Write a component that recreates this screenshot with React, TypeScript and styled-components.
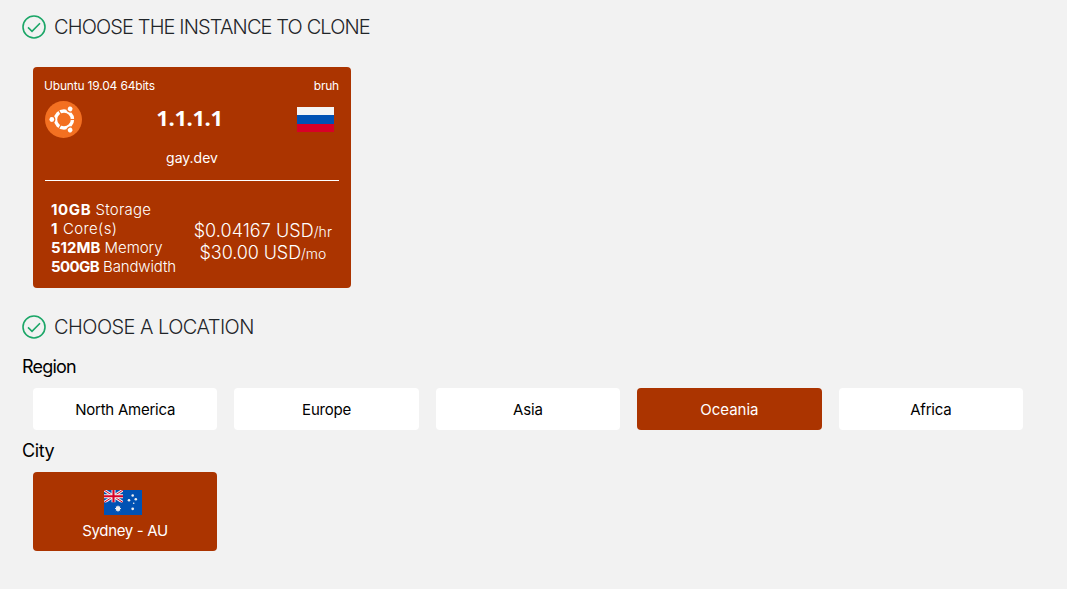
import React, { useState } from "react";
import styled, { createGlobalStyle, css } from "styled-components";

const GlobalStyle = createGlobalStyle`
  * {
    box-sizing: border-box;
  }
  body {
    margin: 0;
    background: #f2f2f2;
    font-family: "Inter", "Liberation Sans", sans-serif;
    color: #000;
  }
`;

const regions = [
  { name: "North America", spacing: -0.25 },
  { name: "Europe", spacing: -0.2 },
  { name: "Asia", spacing: -0.1 },
  { name: "Oceania", spacing: 0 },
  { name: "Africa", spacing: -0.25 },
];

const specs = [
  { amount: "10GB", label: "Storage", bold: 0.6, spacing: 0.2 },
  { amount: "1", label: "Core(s)", bold: 1, spacing: 0.35 },
  { amount: "512MB", label: "Memory", bold: 0, spacing: -0.05 },
  { amount: "500GB", label: "Bandwidth", bold: -0.6, spacing: -0.15 },
];

const Page = styled.main`
  width: 1067px;
  height: 589px;
  padding: 12px 44px 0 22px;
  background: #f2f2f2;
  overflow: hidden;
`;

const Heading = styled.h2`
  display: flex;
  align-items: center;
  gap: 8px;
  height: 30px;
  margin: 0;
  font-size: 20px;
  font-weight: 300;
  color: #1f2529;
  white-space: nowrap;
`;

const HeadingText = styled.span<{ $spacing: number }>`
  letter-spacing: ${(p) => p.$spacing}px;
`;

const InstanceCard = styled.section`
  display: flex;
  flex-direction: column;
  width: 318px;
  height: 221px;
  margin: 25px 0 24px 11px;
  padding: 10px 12px 0;
  border-radius: 4px;
  background: #ab3400;
  color: #fff;
  white-space: nowrap;
`;

const CardTop = styled.div`
  display: flex;
  justify-content: space-between;
  height: 18px;
  line-height: 18px;
  font-size: 12px;
`;

const OsName = styled.span`
  margin-left: -1px;
  letter-spacing: -0.18px;
`;

const Plan = styled.span`
  letter-spacing: -0.2px;
`;

const CardMain = styled.div`
  display: flex;
  align-items: center;
  justify-content: space-between;
  height: 48px;
  padding-right: 5px;
`;

const Address = styled.strong`
  padding-bottom: 4px;
  font-family: "Open Sans", "Noto Sans", sans-serif;
  font-size: 22px;
  font-weight: 700;
  line-height: 30px;
  letter-spacing: -0.4px;
`;

const Host = styled.div`
  height: 38px;
  padding-top: 5px;
  font-size: 14px;
  line-height: 20px;
  text-align: center;
  border-bottom: 1px solid #fff;
`;

const CardDetails = styled.div`
  display: flex;
  justify-content: space-between;
  padding: 19px 7px 0 6px;
`;

const Specs = styled.ul`
  margin: 0;
  padding: 0;
  list-style: none;
  font-size: 15px;
  line-height: 19px;
`;

const Spec = styled.li<{ $spacing: number; $bold: number }>`
  font-weight: 300;
  letter-spacing: ${(p) => p.$spacing}px;

  b {
    font-weight: 700;
    letter-spacing: ${(p) => p.$bold}px;
  }
`;

const Prices = styled.div`
  padding-top: 20px;
  font-size: 18px;
  font-weight: 300;
  line-height: 22px;
  text-align: center;
`;

const Price = styled.div<{ $spacing: number }>`
  height: 22px;
  letter-spacing: ${(p) => p.$spacing}px;

  small {
    font-size: 14px;
    line-height: 1;
  }
`;

const FieldLabel = styled.h3<{ $spacing: number }>`
  height: 42px;
  margin: 0;
  font-size: 18px;
  font-weight: 400;
  line-height: 42px;
  letter-spacing: ${(p) => p.$spacing}px;
`;

const RegionField = styled.div`
  padding-top: 4px;
`;

const RegionRow = styled.div`
  display: grid;
  grid-template-columns: repeat(5, 1fr);
  gap: 17px;
  margin-left: 11px;
`;

const option = css<{ $active: boolean; $spacing: number }>`
  border: 0;
  border-radius: 4px;
  padding: 0;
  font-family: inherit;
  font-size: 15px;
  font-weight: 400;
  letter-spacing: ${(p) => p.$spacing}px;
  background: ${(p) => (p.$active ? "#ab3400" : "#fff")};
  color: ${(p) => (p.$active ? "#fff" : "#000")};
`;

const RegionButton = styled.button<{ $active: boolean; $spacing: number }>`
  ${option}
  height: 42px;
`;

const CityButton = styled.button<{ $active: boolean; $spacing: number }>`
  ${option}
  display: flex;
  flex-direction: column;
  align-items: center;
  width: 184px;
  height: 79px;
  margin-left: 11px;
  padding-top: 18px;
  gap: 6px;
  line-height: 20px;

  svg {
    margin-right: 4px;
  }
`;

const RussianFlag = styled.div`
  width: 37px;
  height: 25px;
  background: linear-gradient(#f4f4f4 33.3%, #0052b4 33.3% 66.6%, #d80027 66.6%);
`;

const CheckIcon = () => (
  <svg width="24" height="24" viewBox="0 0 24 24" fill="none" stroke="#1ba667">
    <circle cx="12" cy="12" r="11" strokeWidth="1.6" />
    <path d="M6 12.4l4 3.9 8-8" strokeWidth="1.6" />
  </svg>
);

const UbuntuLogo = () => (
  <svg width="37" height="37" viewBox="0 0 37 37">
    <circle cx="18.5" cy="18.5" r="18.5" fill="#f37021" />
    <circle cx="19" cy="18.5" r="8.5" fill="none" stroke="#fff" strokeWidth="3.4" />
    {[60, 180, 300].map((angle) => (
      <g key={angle} transform={`rotate(${angle} 19 18.5)`}>
        <circle cx="31" cy="18.5" r="3.4" fill="#f37021" />
        <circle cx="31.2" cy="18.5" r="2.4" fill="#fff" />
        <path d="M12.8 18.5H8" stroke="#f37021" strokeWidth="1.1" />
      </g>
    ))}
  </svg>
);

const stars = [
  [28.7, 5.5, 1.3],
  [25, 10.3, 1.3],
  [31.8, 9.3, 1.3],
  [29.7, 13.2, 0.8],
  [28.7, 18.8, 1.4],
];

const AustralianFlag = () => (
  <svg width="38" height="25" viewBox="0 0 38 25">
    <path d="M0 0h38v25H0z" fill="#0052b4" />
    <path d="M0 0l19 12.5M19 0L0 12.5" stroke="#f0f0f0" strokeWidth="2.8" />
    <path d="M0 0l19 12.5M19 0L0 12.5" stroke="#d80027" strokeWidth="1" />
    <path d="M9.5 0v12.5M0 6.25h19" stroke="#f0f0f0" strokeWidth="4" />
    <path d="M9.5 0v12.5M0 6.25h19" stroke="#d80027" strokeWidth="2.1" />
    <path d="M19 0h2v14H0v-1.5h19z" fill="#0052b4" />
    <circle cx="14" cy="18.6" r="2.3" fill="#f0f0f0" />
    <path
      d="M14 15.6v6M11 18.6h6M11.9 16.5l4.2 4.2M16.1 16.5l-4.2 4.2"
      stroke="#f0f0f0"
      strokeWidth="1"
    />
    {stars.map(([x, y, r]) => (
      <circle key={`${x}-${y}`} cx={x} cy={y} r={r} fill="#f0f0f0" />
    ))}
  </svg>
);

function App() {
  const [region, setRegion] = useState("Oceania");

  return (
    <>
      <GlobalStyle />
      <Page>
        <Heading>
          <CheckIcon />
          <HeadingText $spacing={-0.87}>CHOOSE THE INSTANCE TO CLONE</HeadingText>
        </Heading>
        <InstanceCard>
          <CardTop>
            <OsName>Ubuntu 19.04 64bits</OsName>
            <Plan>bruh</Plan>
          </CardTop>
          <CardMain>
            <UbuntuLogo />
            <Address>1.1.1.1</Address>
            <RussianFlag />
          </CardMain>
          <Host>gay.dev</Host>
          <CardDetails>
            <Specs>
              {specs.map(({ amount, label, bold, spacing }) => (
                <Spec key={label} $spacing={spacing} $bold={bold}>
                  <b>{amount}</b> {label}
                </Spec>
              ))}
            </Specs>
            <Prices>
              <Price $spacing={0.05}>
                $0.04167 USD<small>/hr</small>
              </Price>
              <Price $spacing={-0.1}>
                $30.00 USD<small>/mo</small>
              </Price>
            </Prices>
          </CardDetails>
        </InstanceCard>
        <Heading>
          <CheckIcon />
          <HeadingText $spacing={-0.55}>CHOOSE A LOCATION</HeadingText>
        </Heading>
        <RegionField>
          <FieldLabel $spacing={-0.8}>Region</FieldLabel>
          <RegionRow>
            {regions.map(({ name, spacing }) => (
              <RegionButton
                key={name}
                $active={name === region}
                $spacing={spacing}
                onClick={() => setRegion(name)}
              >
                {name}
              </RegionButton>
            ))}
          </RegionRow>
        </RegionField>
        <FieldLabel $spacing={-0.4}>City</FieldLabel>
        <CityButton $active $spacing={-0.35}>
          <AustralianFlag />
          Sydney - AU
        </CityButton>
      </Page>
    </>
  );
}

export default App;
